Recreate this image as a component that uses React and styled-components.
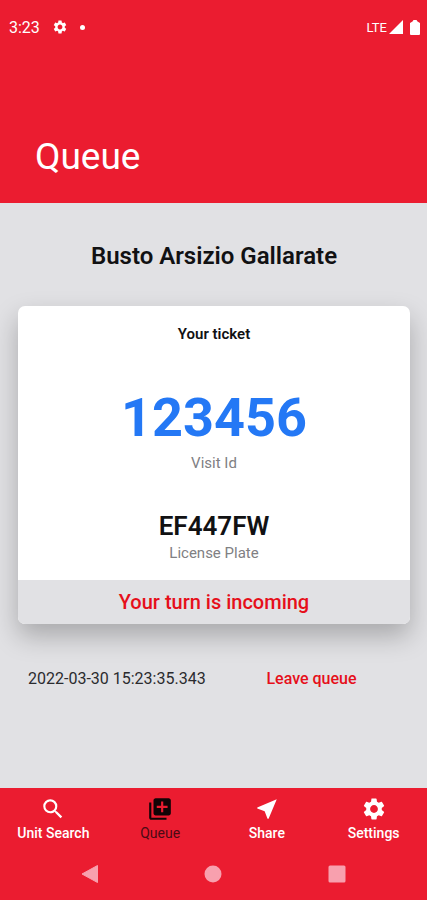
import styled, { createGlobalStyle } from "styled-components";
import {
  MdSearch,
  MdLibraryAdd,
  MdNearMe,
  MdSettings,
} from "react-icons/md";

const GlobalStyle = createGlobalStyle`
  * {
    box-sizing: border-box;
  }

  body {
    margin: 0;
    background-color: #e1e1e4;
    color: #111113;
    font-family: Roboto, "Liberation Sans", sans-serif;
  }
`;

const Screen = styled.div`
  display: flex;
  flex-direction: column;
  min-height: 100vh;
`;

const Header = styled.header`
  background-color: #eb1c30;
  color: white;
`;

const StatusBar = styled.div`
  display: flex;
  align-items: center;
  justify-content: space-between;
  height: 54px;
  padding: 0 7px 0 9px;
  font-size: 16px;
`;

const StatusGroup = styled.div`
  display: flex;
  align-items: center;
  gap: ${(props) => props.$gap};
`;

const StatusDot = styled.span`
  width: 5px;
  height: 5px;
  border-radius: 50%;
  background-color: white;
`;

const NetworkLabel = styled.span`
  font-size: 13px;
`;

const PageTitle = styled.h1`
  margin: 0;
  padding: 81px 35px 24px;
  font-size: 37px;
  line-height: 44px;
  font-weight: 400;
`;

const Main = styled.main`
  flex: 1;
  padding: 39px 17px 0 18px;
`;

const StationName = styled.h2`
  margin: 0 0 36px;
  font-size: 24px;
  line-height: 28px;
  font-weight: 600;
  text-align: center;
`;

const Card = styled.section`
  overflow: hidden;
  border-radius: 7px;
  background-color: white;
  text-align: center;
  box-shadow: 0 12px 26px rgba(0, 0, 0, 0.25);
`;

const CardTitle = styled.h3`
  margin: 0;
  padding: 19px 0 45px;
  font-size: 15px;
  line-height: 18px;
  font-weight: 600;
`;

const TicketNumber = styled.p`
  margin: 0;
  color: #2478f5;
  font-size: 54px;
  line-height: 60px;
  font-weight: 700;
`;

const LicensePlate = styled.p`
  margin: 0;
  font-size: 26px;
  line-height: 28px;
  font-weight: 600;
`;

const Caption = styled.p`
  margin: 0;
  padding: ${(props) => props.$padding};
  color: #808083;
  font-size: 15px;
  line-height: 18px;
`;

const CardStatus = styled.p`
  margin: 0;
  background-color: #e1e1e4;
  color: #e60f1a;
  font-size: 20px;
  line-height: 44px;
  font-weight: 500;
`;

const QueueActions = styled.div`
  display: grid;
  grid-template-columns: 1fr 1fr;
  padding: 45px 4px 0 10px;
  color: #2b2b2e;
  font-size: 16px;
  line-height: 20px;
`;

const LeaveButton = styled.button`
  justify-self: center;
  padding: 0;
  border: none;
  background: none;
  color: #e60f1a;
  font: inherit;
  font-weight: 500;
  cursor: pointer;
`;

const Footer = styled.footer`
  background-color: #eb1c30;
`;

const TabBar = styled.nav`
  display: grid;
  grid-template-columns: repeat(4, 1fr);
  padding-top: 8px;
`;

const Tab = styled.a`
  display: flex;
  flex-direction: column;
  align-items: center;
  gap: 3px;
  color: ${(props) => (props.$active ? "#4a0a14" : "white")};
  font-size: 14px;
  line-height: 16px;
  font-weight: ${(props) => (props.$active ? 400 : 500)};
  text-decoration: none;

  svg {
    color: ${(props) => (props.$active ? "#120406" : "white")};
  }
`;

const SystemBar = styled.div`
  display: flex;
  justify-content: space-around;
  padding: 23px 28px 16px;
`;

const SystemButton = styled.button`
  display: flex;
  padding: 0;
  border: none;
  background: none;
  color: #f8a0ae;
  cursor: pointer;
`;

const tabs = [
  { label: "Unit Search", href: "#search", Icon: MdSearch },
  { label: "Queue", href: "#queue", Icon: MdLibraryAdd },
  { label: "Share", href: "#share", Icon: MdNearMe },
  { label: "Settings", href: "#settings", Icon: MdSettings },
];

function SignalIcon() {
  return (
    <svg width="14" height="14" viewBox="0 0 14 14" fill="currentColor">
      <path d="M14 0v14H0z" />
    </svg>
  );
}

function BatteryIcon() {
  return (
    <svg width="10" height="15" viewBox="0 0 10 15" fill="currentColor">
      <path d="M3.500 0h3l1 1.500L10 3v11a1 1 0 0 1-1 1H1a1 1 0 0 1-1-1V3l2.500-1.500z" />
    </svg>
  );
}

export default function App() {
  const activeTab = "Queue";

  return (
    <>
      <GlobalStyle />
      <Screen>
        <Header>
          <StatusBar>
            <StatusGroup $gap="12px">
              <span>3:23</span>
              <MdSettings size={16} />
              <StatusDot />
            </StatusGroup>
            <StatusGroup $gap="2px">
              <NetworkLabel>LTE</NetworkLabel>
              <StatusGroup $gap="7px">
                <SignalIcon />
                <BatteryIcon />
              </StatusGroup>
            </StatusGroup>
          </StatusBar>
          <PageTitle>Queue</PageTitle>
        </Header>

        <Main>
          <StationName>Busto Arsizio Gallarate</StationName>
          <Card>
            <CardTitle>Your ticket</CardTitle>
            <TicketNumber>123456</TicketNumber>
            <Caption $padding="6px 0 40px">Visit Id</Caption>
            <LicensePlate>EF447FW</LicensePlate>
            <Caption $padding="4px 0 18px">License Plate</Caption>
            <CardStatus>Your turn is incoming</CardStatus>
          </Card>
          <QueueActions>
            <time>2022-03-30 15:23:35.343</time>
            <LeaveButton type="button">Leave queue</LeaveButton>
          </QueueActions>
        </Main>

        <Footer>
          <TabBar>
            {tabs.map(({ label, href, Icon }) => (
              <Tab key={label} href={href} $active={label === activeTab}>
                <Icon size={26} />
                {label}
              </Tab>
            ))}
          </TabBar>
          <SystemBar>
            <SystemButton type="button" aria-label="Back">
              <svg width="18" height="20" viewBox="0 0 18 20" fill="currentColor">
                <path d="M16.500 1.500v17L1 10z" stroke="currentColor" strokeLinejoin="round" />
              </svg>
            </SystemButton>
            <SystemButton type="button" aria-label="Home">
              <svg width="18" height="20" viewBox="0 0 18 20" fill="currentColor">
                <circle cx="9" cy="10" r="8.500" />
              </svg>
            </SystemButton>
            <SystemButton type="button" aria-label="Recent apps">
              <svg width="18" height="20" viewBox="0 0 18 20" fill="currentColor">
                <rect x="0.500" y="1.500" width="17" height="17" rx="1.500" />
              </svg>
            </SystemButton>
          </SystemBar>
        </Footer>
      </Screen>
    </>
  );
}
